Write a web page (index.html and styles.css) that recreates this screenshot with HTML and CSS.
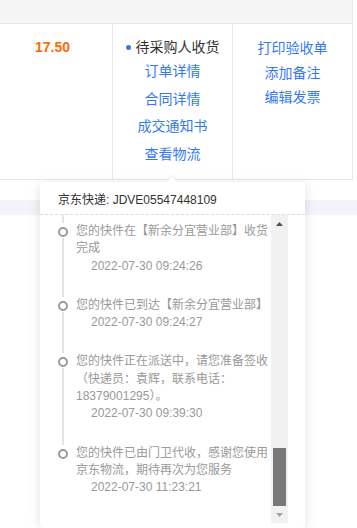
FILE: index.html
```html
<!DOCTYPE html>
<html lang="zh-CN">
<head>
    <meta charset="UTF-8">
    <meta name="viewport" content="width=device-width, initial-scale=1.0">
    <title>订单物流</title>
    <link rel="stylesheet" href="styles.css">
</head>
<body>
    <div class="order-table">
        <div class="order-head"></div>
        <div class="order-row">
            <div class="cell cell-price">
                <span class="price">17.50</span>
            </div>
            <div class="cell cell-status">
                <div class="status"><i class="status-dot"></i>待采购人收货</div>
                <a class="link link-tall" href="#">订单详情</a>
                <a class="link link-tall" href="#">合同详情</a>
                <a class="link link-tall" href="#">成交通知书</a>
                <a class="link link-tall" href="#">查看物流</a>
            </div>
            <div class="cell cell-action">
                <a class="link" href="#">打印验收单</a>
                <a class="link" href="#">添加备注</a>
                <a class="link" href="#">编辑发票</a>
            </div>
        </div>
    </div>

    <div class="next-head"></div>

    <!-- 物流弹窗 -->
    <div class="logistics-pop">
        <div class="pop-title">京东快递: JDVE05547448109</div>
        <div class="pop-body">
            <div class="track-list">
                <div class="track-cut"></div>

                <div class="track-item">
                    <div class="rail"><i class="node"></i><i class="tail"></i></div>
                    <div class="track-text">
                        <p>您的快件在【新余分宜营业部】收货完成</p>
                        <p class="track-time">2022-07-30 09:24:26</p>
                    </div>
                </div>

                <div class="track-item">
                    <div class="rail"><i class="node"></i><i class="tail"></i></div>
                    <div class="track-text">
                        <p>您的快件已到达【新余分宜营业部】</p>
                        <p class="track-time">2022-07-30 09:24:27</p>
                    </div>
                </div>

                <div class="track-item">
                    <div class="rail"><i class="node"></i><i class="tail"></i></div>
                    <div class="track-text">
                        <p>您的快件正在派送中，请您准备签收（快递员：袁辉，联系电话：18379001295）。</p>
                        <p class="track-time">2022-07-30 09:39:30</p>
                    </div>
                </div>

                <div class="track-item last">
                    <div class="rail"><i class="node"></i></div>
                    <div class="track-text">
                        <p>您的快件已由门卫代收，感谢您使用京东物流，期待再次为您服务</p>
                        <p class="track-time">2022-07-30 11:23:21</p>
                    </div>
                </div>
            </div>

            <div class="scrollbar">
                <div class="sb-btn">
                    <svg width="7" height="4" viewBox="0 0 7 4"><path d="M3.5 0 L7 4 L0 4 Z" fill="#505050"/></svg>
                </div>
                <div class="sb-track"><div class="sb-thumb"></div></div>
                <div class="sb-btn">
                    <svg width="7" height="4" viewBox="0 0 7 4"><path d="M0 0 L7 0 L3.5 4 Z" fill="#a3a3a3"/></svg>
                </div>
            </div>
        </div>
    </div>
</body>
</html>
```

FILE: styles.css
```css
body {
    margin: 0;
    font-family: "Liberation Sans", "Noto Sans CJK SC", sans-serif;
    background-color: #fff;
    color: #333;
    position: relative;
    min-height: 528px;
    overflow: hidden;
}
p {
    margin: 0;
}
a {
    text-decoration: none;
}
.order-table {
    width: 360px;
    margin-left: -7px;
}
.order-head {
    height: 24px;
    box-sizing: border-box;
    background-color: #f5f5f5;
    border-bottom: 1px solid #e8e8e8;
    border-right: 1px solid #e8e8e8;
}
.order-row {
    display: grid;
    grid-template-columns: 120px 120px 120px;
    height: 156px;
    box-sizing: border-box;
    border-bottom: 1px solid #e8e8e8;
}
.cell {
    border-right: 1px solid #e8e8e8;
    display: flex;
    flex-direction: column;
    align-items: center;
}
.cell-price {
    padding-top: 13px;
}
.price {
    color: #ff6a00;
    font-weight: bold;
    font-size: 14px;
    line-height: 20px;
}
.cell-status {
    padding-top: 13px;
}
.status {
    display: flex;
    align-items: center;
    gap: 5px;
    font-size: 14px;
    line-height: 20px;
    color: #333;
    margin-bottom: 1px;
}
.status-dot {
    width: 5px;
    height: 5px;
    border-radius: 50%;
    background-color: #3478f6;
}
.link {
    display: block;
    color: #3478f6;
    font-size: 14px;
    line-height: 24.5px;
}
.link-tall {
    line-height: 27.7px;
}
.cell-action {
    padding-top: 12px;
}
.next-head {
    height: 15px;
    margin-top: 20px;
    background-color: #f3f4f9;
}

/* popover */
.logistics-pop {
    position: absolute;
    top: 182px;
    left: 40px;
    width: 265px;
    background-color: #fff;
    border-radius: 4px;
    box-shadow: 0 2px 12px rgba(0,0,0,0.12);
    padding-bottom: 5px;
}
.logistics-pop::before {
    content: "";
    position: absolute;
    top: -4px;
    left: 128px;
    width: 8px;
    height: 8px;
    background-color: #fff;
    transform: rotate(45deg);
    box-shadow: -1px -1px 2px rgba(0,0,0,0.06);
}
.pop-title {
    position: relative;
    padding: 10px 18px 5px;
    font-size: 12px;
    line-height: 17px;
    color: #333;
    border-bottom: 1px dashed #dcdcdc;
}
.pop-body {
    display: flex;
    height: 308px;
    padding-right: 17px;
}
.track-list {
    flex: 1;
    overflow: hidden;
    padding-left: 18px;
}
.track-cut {
    width: 10px;
    height: 8px;
    display: flex;
    justify-content: center;
}
.track-cut::before {
    content: "";
    width: 2px;
    background-color: #e4e4e4;
}
.track-item {
    display: flex;
    gap: 8px;
}
.rail {
    width: 10px;
    flex-shrink: 0;
    display: flex;
    flex-direction: column;
    align-items: center;
}
.node {
    width: 10px;
    height: 10px;
    box-sizing: border-box;
    border: 2px solid #9a9a9a;
    border-radius: 50%;
    background-color: #fff;
    margin-top: 4px;
    flex-shrink: 0;
}
.tail {
    flex: 1;
    width: 2px;
    background-color: #e4e4e4;
    margin-top: 1px;
}
.track-text {
    flex: 1;
    font-size: 12px;
    line-height: 17.3px;
    color: #999;
    padding-bottom: 22px;
}
.track-time {
    padding-left: 15px;
    color: #999;
}

/* fake scrollbar */
.scrollbar {
    width: 17px;
    background-color: #f1f1f1;
    display: flex;
    flex-direction: column;
}
.sb-btn {
    height: 17px;
    display: flex;
    align-items: center;
    justify-content: center;
}
.sb-btn svg {
    display: block;
}
.sb-track {
    flex: 1;
    display: flex;
    flex-direction: column;
    justify-content: flex-end;
    padding: 0 2px;
}
.sb-thumb {
    height: 58px;
    background-color: #787878;
}
```
